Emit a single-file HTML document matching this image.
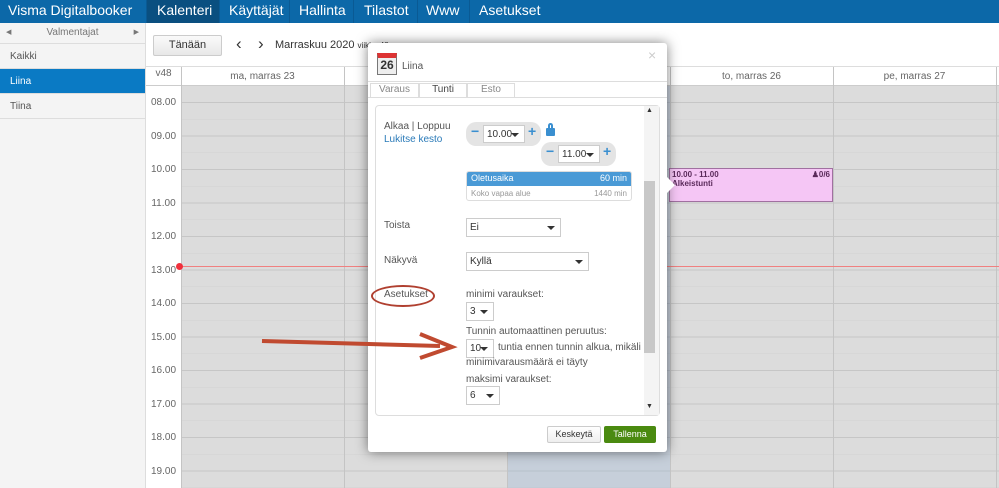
<!DOCTYPE html>
<html><head><meta charset="utf-8"><style>
*{box-sizing:border-box;margin:0;padding:0}
body{width:999px;height:488px;overflow:hidden;font-family:"Liberation Sans",sans-serif;background:#fff;position:relative;font-size:11px;color:#555}
.top{position:absolute;left:0;top:0;width:999px;height:23px;background:#0c68a8;color:#fff;font-size:14px}
.top span{position:absolute;top:2px}
.tab{position:absolute;top:0;height:23px;border-left:1px solid #0a5a94}
.side{position:absolute;left:0;top:23px;width:146px;height:465px;background:#f4f4f4;border-right:1px solid #ddd}
.side div{height:25px;line-height:25px;padding-left:10px;border-bottom:1px solid #ddd;color:#555}
.abs{position:absolute}
.grid{position:absolute;left:181px;top:86px;width:818px;height:402px;background:#dcdcdc;
background-image:repeating-linear-gradient(to bottom,transparent 0,transparent 16px,#c6c6c6 16px,#c6c6c6 17px,transparent 17px,transparent 33px,#d2d2d2 33px,#d2d2d2 33.5px)}
.vl{position:absolute;top:67px;width:1px;height:421px;background:#c4c4c4}
.hl{position:absolute;left:146px;width:35px;text-align:center;font-size:10px;color:#666}
.dh{position:absolute;top:67px;height:19px;line-height:19px;font-size:10px;color:#666;text-align:center;width:163px}
.modal{position:absolute;left:368px;top:43px;width:299px;height:409px;background:#fff;border-radius:3px;box-shadow:0 0 12px rgba(0,0,0,.5)}
.sel{position:absolute;border:1px solid #ccc;background:#fff;height:19px;line-height:17px;padding-left:3px;font-size:10px;color:#333}
.sel:after{content:"";position:absolute;right:5px;top:7px;border:4px solid transparent;border-top:4px solid #333;border-bottom:0}
.lbl{position:absolute;font-size:10px;color:#555}
</style></head><body>
<div class="top">
<span style="left:8px">Visma Digitalbooker</span>
<div class="tab" style="left:146px;width:73px;background:#0a4f80"></div>
<span style="left:157px">Kalenteri</span>
<div class="tab" style="left:219px;width:70px"></div><span style="left:229px">Käyttäjät</span>
<div class="tab" style="left:289px;width:64px"></div><span style="left:299px">Hallinta</span>
<div class="tab" style="left:353px;width:64px"></div><span style="left:364px">Tilastot</span>
<div class="tab" style="left:417px;width:52px"></div><span style="left:426px">Www</span>
<div class="tab" style="left:469px;width:80px"></div><span style="left:479px">Asetukset</span>
</div>
<div class="side">
<div style="height:21px;line-height:20px;text-align:center;padding:0;color:#777;font-size:10px;position:relative"><span style="position:absolute;left:6px;font-size:7px">◀</span>Valmentajat<span style="position:absolute;right:6px;font-size:7px">▶</span></div>
<div style="font-size:10px">Kaikki</div>
<div style="background:#0a7ac4;color:#fff;font-size:10px">Liina</div>
<div style="font-size:10px">Tiina</div>
</div>
<div class="abs" style="left:153px;top:35px;width:69px;height:21px;border:1px solid #ccc;border-radius:2px;background:linear-gradient(#fafafa,#e8e8e8);text-align:center;line-height:19px;font-size:11px;color:#333">Tänään</div>
<div class="abs" style="left:236px;top:34px;font-size:17px;color:#333">&#x2039;</div>
<div class="abs" style="left:258px;top:34px;font-size:17px;color:#333">&#x203A;</div>
<div class="abs" style="left:275px;top:39px;font-size:11px;color:#333">Marraskuu 2020 <span style="font-size:8px">viikko 48</span></div>
<div class="abs" style="left:146px;top:66px;width:853px;height:1px;background:#ddd"></div>
<div class="grid"></div>
<div class="abs" style="left:507px;top:86px;width:163px;height:402px;background:rgba(150,180,215,.3)"></div>
<div class="abs" style="left:146px;top:67px;width:853px;height:19px;background:#fff;border-bottom:1px solid #ccc"></div>
<div class="vl" style="left:181px"></div><div class="vl" style="left:344px"></div><div class="vl" style="left:507px"></div><div class="vl" style="left:670px"></div><div class="vl" style="left:833px"></div><div class="vl" style="left:996px"></div>
<div class="hl" style="top:68px">v48</div>
<div class="dh" style="left:181px">ma, marras 23</div>
<div class="dh" style="left:670px">to, marras 26</div>
<div class="dh" style="left:833px">pe, marras 27</div>
<div class="hl" style="top:97px">08.00</div><div class="hl" style="top:131px">09.00</div><div class="hl" style="top:164px">10.00</div><div class="hl" style="top:198px">11.00</div><div class="hl" style="top:231px">12.00</div><div class="hl" style="top:265px">13.00</div><div class="hl" style="top:298px">14.00</div><div class="hl" style="top:332px">15.00</div><div class="hl" style="top:365px">16.00</div><div class="hl" style="top:399px">17.00</div><div class="hl" style="top:432px">18.00</div><div class="hl" style="top:466px">19.00</div>
<div class="abs" style="left:181px;top:266px;width:818px;height:1px;background:#f08080"></div>
<div class="abs" style="left:176px;top:263px;width:7px;height:7px;border-radius:50%;background:#f0303c"></div>
<div class="abs" style="left:669px;top:168px;width:164px;height:34px;background:#f5c6f5;border:1px solid #a070a0;font-size:8px;color:#5a2a5a;padding:1px 2px;font-weight:bold;line-height:9px">10.00 - 11.00<br>Alkeistunti<span style="position:absolute;right:2px;top:1px">♟0/6</span></div>
<div class="modal">
<div class="abs" style="left:9px;top:10px;width:20px;height:22px;border:1px solid #777;border-top:5px solid #d33;background:#eee;font-size:12px;font-weight:bold;color:#333;text-align:center;line-height:15px">26</div>
<div class="abs" style="left:34px;top:18px;font-size:10px">Liina</div>
<div class="abs" style="left:280px;top:4px;font-size:14px;color:#ccc">×</div>
<div class="abs" style="left:0;top:38px;width:299px;height:1px;background:#ddd"></div>
<div class="abs" style="left:2px;top:40px;width:49px;height:14px;border:1px solid #ddd;border-bottom:0;text-align:center;font-size:10px;color:#888">Varaus</div>
<div class="abs" style="left:51px;top:40px;width:48px;height:15px;border:1px solid #ddd;border-bottom:0;background:#fff;text-align:center;font-size:10px;color:#444">Tunti</div>
<div class="abs" style="left:99px;top:40px;width:48px;height:14px;border:1px solid #ddd;border-bottom:0;text-align:center;font-size:10px;color:#888">Esto</div>
<div class="abs" style="left:0;top:54px;width:299px;height:1px;background:#ddd"></div>
<div class="abs" style="left:7px;top:62px;width:285px;height:311px;border:1px solid #ddd;border-radius:4px"></div>
<div class="abs" style="left:276px;top:63px;width:15px;height:309px;background:#f4f4f4"></div>
<div class="abs" style="left:276px;top:138px;width:11px;height:172px;background:#c8c8c8"></div>
<div class="abs" style="left:278px;top:64px;font-size:7px;color:#333">▲</div>
<div class="abs" style="left:278px;top:360px;font-size:7px;color:#333">▼</div>
<div class="lbl" style="left:16px;top:78px">Alkaa | Loppuu</div>
<div class="lbl" style="left:16px;top:91px;color:#2a7ab8">Lukitse kesto</div>
<div class="abs" style="left:98px;top:79px;width:75px;height:24px;background:#e4e4e4;border-radius:10px"></div>
<div class="abs" style="left:173px;top:99px;width:75px;height:24px;background:#e4e4e4;border-radius:10px"></div>
<div class="sel" style="left:115px;top:82px;width:42px;height:18px">10.00</div>
<div class="sel" style="left:190px;top:102px;width:42px;height:18px">11.00</div>
<div class="abs" style="left:103px;top:80px;color:#3a8fd0;font-size:14px;font-weight:bold">−</div>
<div class="abs" style="left:160px;top:80px;color:#3a8fd0;font-size:14px;font-weight:bold">+</div>
<div class="abs" style="left:178px;top:100px;color:#3a8fd0;font-size:14px;font-weight:bold">−</div>
<div class="abs" style="left:235px;top:100px;color:#3a8fd0;font-size:14px;font-weight:bold">+</div>
<div class="abs" style="left:178px;top:85px;width:9px;height:8px;background:#3a8fd0;border-radius:1px"></div>
<div class="abs" style="left:180px;top:80px;width:5px;height:7px;border:2px solid #3a8fd0;border-bottom:0;border-radius:3px 3px 0 0"></div>
<div class="abs" style="left:98px;top:128px;width:166px;height:30px;border:1px solid #ddd;border-radius:3px;overflow:hidden">
<div style="background:#4a9ad6;color:#fff;height:14px;font-size:9px;padding:1px 4px">Oletusaika<span style="float:right">60 min</span></div>
<div style="color:#999;font-size:8px;padding:3px 4px">Koko vapaa alue<span style="float:right">1440 min</span></div></div>
<div class="lbl" style="left:16px;top:177px">Toista</div>
<div class="sel" style="left:98px;top:175px;width:95px">Ei</div>
<div class="lbl" style="left:16px;top:212px">Näkyvä</div>
<div class="sel" style="left:98px;top:209px;width:123px">Kyllä</div>
<div class="abs" style="left:3px;top:242px;width:64px;height:22px;border:2px solid #b04030;border-radius:50%"></div>
<div class="lbl" style="left:16px;top:246px">Asetukset</div>
<div class="lbl" style="left:98px;top:246px">minimi varaukset:</div>
<div class="sel" style="left:98px;top:259px;width:28px">3</div>
<div class="lbl" style="left:98px;top:283px">Tunnin automaattinen peruutus:</div>
<div class="sel" style="left:98px;top:296px;width:28px">10</div>
<div class="lbl" style="left:130px;top:299px">tuntia ennen tunnin alkua, mikäli</div>
<div class="lbl" style="left:98px;top:314px">minimivarausmäärä ei täyty</div>
<div class="lbl" style="left:98px;top:331px">maksimi varaukset:</div>
<div class="sel" style="left:98px;top:343px;width:34px">6</div>
<div class="abs" style="left:179px;top:383px;width:54px;height:17px;border:1px solid #ccc;border-radius:2px;background:linear-gradient(#fff,#eee);text-align:center;line-height:15px;font-size:9px;color:#333">Keskeytä</div>
<div class="abs" style="left:236px;top:383px;width:52px;height:17px;border-radius:2px;background:#4a8a10;text-align:center;line-height:17px;font-size:9px;color:#fff">Tallenna</div>
</div>
<div class="abs" style="left:667px;top:177px;width:0;height:0;border:8px solid transparent;border-left:8px solid #fff"></div>
<svg class="abs" style="left:0;top:0" width="999" height="488"><line x1="262" y1="341" x2="440" y2="346" stroke="#c04a30" stroke-width="4"/><path d="M420 334 L452 347 L420 358" fill="none" stroke="#c04a30" stroke-width="4"/></svg>
</body></html>
